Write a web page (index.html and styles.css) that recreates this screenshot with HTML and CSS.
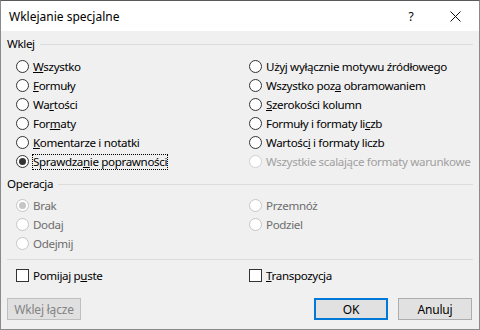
FILE: index.html
```html
<!DOCTYPE html>
<html lang="pl">
<head>
  <meta charset="UTF-8">
  <meta name="viewport" content="width=device-width, initial-scale=1.0">
  <title>Wklejanie specjalne</title>
  <link rel="stylesheet" href="styles.css">
</head>
<body>
  <div class="window">
    <div class="titlebar">
      <span class="title">Wklejanie specjalne</span>
      <span class="help">?</span>
      <span class="close">
        <svg width="11" height="11" viewBox="0 0 11 11"><path d="M0.5 0.5 L10.5 10.5 M10.5 0.5 L0.5 10.5" stroke="#111" stroke-width="1" fill="none"/></svg>
      </span>
    </div>

    <div class="content">
      <div class="group-head"><span>Wklej</span><div class="line"></div></div>
      <div class="options paste">
        <label class="radio"><span class="dot"></span><span><u>W</u>szystko</span></label>
        <label class="radio"><span class="dot"></span><span>U&#380;y<u>j</u> wy&#322;&#261;cznie motywu &#378;r&oacute;d&#322;owego</span></label>
        <label class="radio"><span class="dot"></span><span><u>F</u>ormu&#322;y</span></label>
        <label class="radio"><span class="dot"></span><span>Wszystko poz<u>a</u> obramowaniem</span></label>
        <label class="radio"><span class="dot"></span><span>Wa<u>r</u>to&#347;ci</span></label>
        <label class="radio"><span class="dot"></span><span><u>S</u>zeroko&#347;ci kolumn</span></label>
        <label class="radio"><span class="dot"></span><span>For<u>m</u>aty</span></label>
        <label class="radio"><span class="dot"></span><span>Formu&#322;y i formaty li<u>c</u>zb</span></label>
        <label class="radio"><span class="dot"></span><span><u>K</u>omentarze i notatki</span></label>
        <label class="radio"><span class="dot"></span><span>Warto&#347;c<u>i</u> i formaty liczb</span></label>
        <label class="radio checked"><span class="dot"></span><span class="focus">Sprawdza<u>n</u>ie poprawno&#347;ci</span></label>
        <label class="radio disabled"><span class="dot"></span><span>Wszystkie scalaj&#261;ce formaty warunkowe</span></label>
      </div>

      <div class="group-head op"><span>Operacja</span><div class="line"></div></div>
      <div class="options operation">
        <label class="radio muted checked"><span class="dot"></span><span>Brak</span></label>
        <label class="radio muted"><span class="dot"></span><span>Przemn&oacute;&#380;</span></label>
        <label class="radio muted"><span class="dot"></span><span>Dodaj</span></label>
        <label class="radio muted"><span class="dot"></span><span>Podziel</span></label>
        <label class="radio muted"><span class="dot"></span><span>Odejmij</span></label>
      </div>

      <div class="separator"></div>

      <div class="options checks">
        <label class="check"><span class="box"></span><span>Pomijaj p<u>u</u>ste</span></label>
        <label class="check"><span class="box"></span><span><u>T</u>ranspozycja</span></label>
      </div>

      <div class="buttons">
        <button class="btn" disabled>Wklej &#322;&#261;cze</button>
        <div class="spacer"></div>
        <button class="btn default">OK</button>
        <button class="btn">Anuluj</button>
      </div>
    </div>
  </div>
</body>
</html>
```

FILE: styles.css
```css
body {
  margin: 0;
  padding: 0;
  font-family: "Noto Sans", "Open Sans", sans-serif;
  font-size: 11.6px;
  letter-spacing: -0.35px;
  color: #000;
}
.window {
  width: 480px;
  height: 330px;
  box-sizing: border-box;
  border: 1px solid #8a8a8a;
  border-top-color: #5a5a5a;
  background: #f0f0f0;
  overflow: hidden;
}
.titlebar {
  height: 30px;
  background: #ffffff;
  display: flex;
  align-items: center;
}
.title {
  padding-left: 8px;
  flex: 1;
  font-size: 12px;
  letter-spacing: 0;
}
.help {
  width: 20px;
  text-align: center;
  margin-right: 29px;
  font-size: 12px;
}
.close {
  width: 11px;
  height: 11px;
  margin-right: 18px;
  display: flex;
}
.content {
  padding: 6px 6px 0 6px;
}
.group-head {
  display: flex;
  align-items: center;
  height: 14px;
  line-height: 14px;
}
.group-head span {
  padding-right: 5px;
}
.group-head .line {
  flex: 1;
  border-top: 1px solid #dcdcdc;
}
.group-head.op {
  margin-top: 6px;
}
.options {
  display: grid;
  grid-template-columns: 233px 1fr;
  padding-left: 9px;
}
.paste {
  margin-top: 6px;
}
.operation {
  margin-top: 5px;
}
.radio, .check {
  display: flex;
  align-items: center;
  height: 19px;
  white-space: nowrap;
}
.dot {
  width: 13px;
  height: 13px;
  box-sizing: border-box;
  border: 1px solid #333;
  border-radius: 50%;
  background: #fff;
  margin-right: 4px;
  display: flex;
  align-items: center;
  justify-content: center;
  flex-shrink: 0;
}
.radio.checked .dot::after {
  content: "";
  width: 7px;
  height: 7px;
  border-radius: 50%;
  background: #333;
}
.radio.disabled {
  color: #a0a0a0;
}
.radio.disabled .dot {
  border-color: #d0d0d0;
}
.radio.muted {
  color: #6d6d6d;
}
.radio.muted .dot {
  border-color: #c6c6c6;
}
.radio.muted.checked .dot::after {
  background: #c6c6c6;
}
.focus {
  outline: 1px dotted #000;
  line-height: 14px;
}
.separator {
  margin-top: 6px;
  border-top: 1px solid #dcdcdc;
}
.checks {
  margin-top: 6px;
}
.box {
  width: 13px;
  height: 13px;
  box-sizing: border-box;
  border: 1px solid #333;
  background: #fff;
  margin-right: 4px;
}
.buttons {
  display: flex;
  margin-top: 13px;
  padding-right: 1px;
}
.spacer {
  flex: 1;
}
.btn {
  width: 74px;
  height: 22px;
  box-sizing: border-box;
  background: #e1e1e1;
  border: 1px solid #adadad;
  font-family: "Noto Sans", "Open Sans", sans-serif;
  font-size: 12px;
  letter-spacing: -0.2px;
  color: #000;
  padding: 0;
  margin-left: 10px;
}
.btn:first-child {
  margin-left: 0;
}
.btn:disabled {
  background: #e0e0e0;
  border-color: #bfbfbf;
  color: #838383;
}
.btn.default {
  border: 2px solid #0078d7;
}
```
